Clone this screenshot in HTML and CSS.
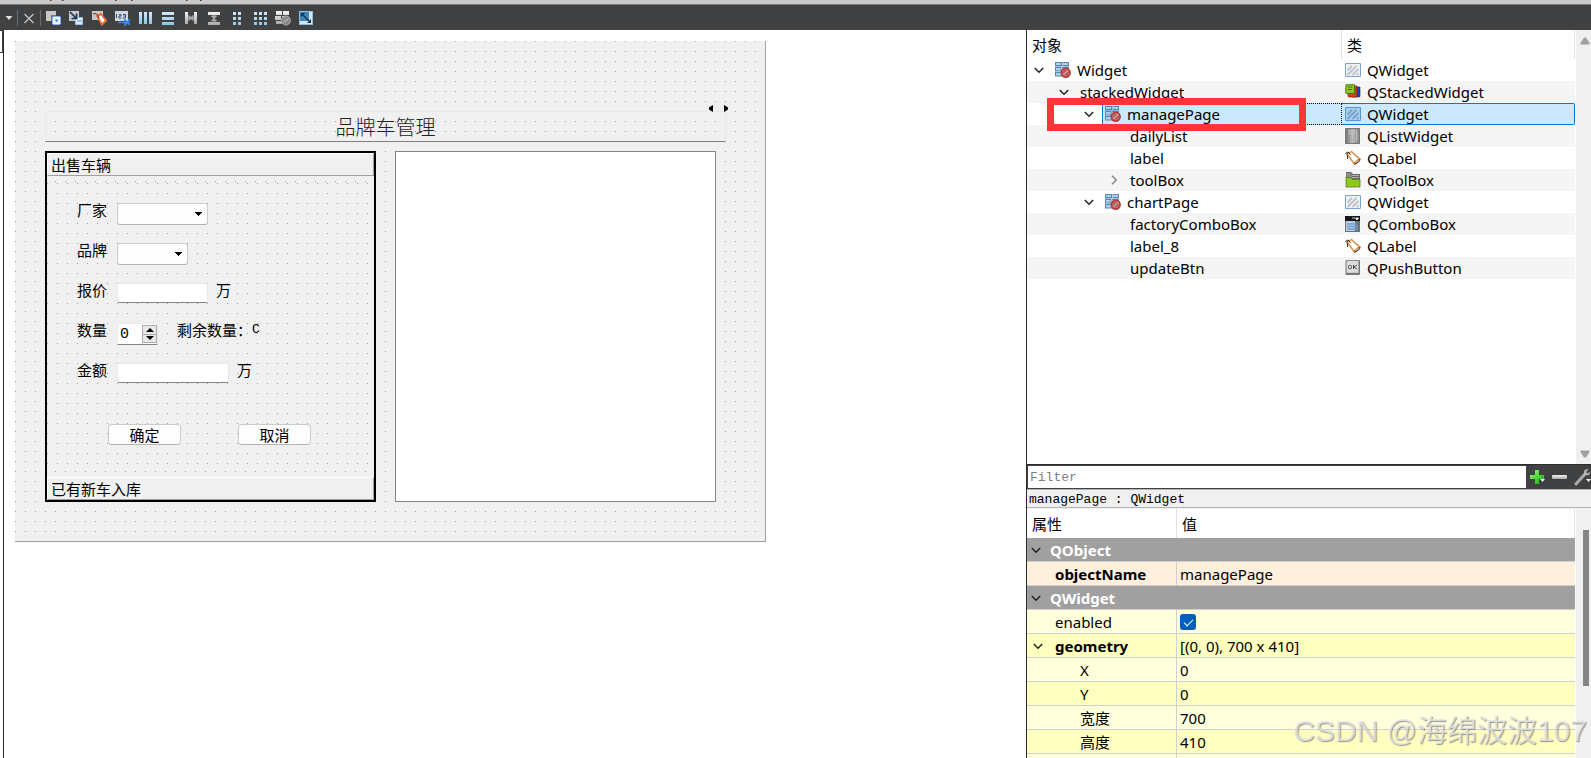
FILE: index.html
```html
<!DOCTYPE html>
<html lang="zh-CN">
<head>
<meta charset="utf-8">
<title>Qt Designer</title>
<link rel="stylesheet" href="styles.css">
</head>
<body>
<svg class="defs" aria-hidden="true">
  <defs>
    <linearGradient id="bluebar" x1="0" y1="0" x2="0" y2="1"><stop offset="0" stop-color="#d4ecf8"/><stop offset="1" stop-color="#8fc4e4"/></linearGradient>
    <linearGradient id="greybar" x1="0" y1="0" x2="0" y2="1"><stop offset="0" stop-color="#f4f4f4"/><stop offset="1" stop-color="#a8a8a8"/></linearGradient>
    <linearGradient id="green" x1="0" y1="0" x2="1" y2="1"><stop offset="0" stop-color="#9dfa7a"/><stop offset="1" stop-color="#00b400"/></linearGradient>
    <linearGradient id="metal" x1="0" y1="0" x2="1" y2="0"><stop offset="0" stop-color="#777"/><stop offset=".5" stop-color="#bbb"/><stop offset="1" stop-color="#888"/></linearGradient>
    <symbol id="down" viewBox="0 0 10 10"><path d="M0.8 3 5 7.2 9.2 3" fill="none" stroke="#222" stroke-width="1.5"/></symbol>
    <symbol id="right" viewBox="0 0 10 10"><path d="M3 0.8 7.2 5 3 9.2" fill="none" stroke="#888" stroke-width="1.5"/></symbol>
    <symbol id="nolayout" viewBox="0 0 16 16">
      <path d="M0 0h7v4.500H0zM7.500 0H14v4.500H7.500zM0 5h6v4.500H0zM6.500 5H14v4.500H6.500zM0 10h7v4.500H0z" fill="#5b86ae"/>
      <path d="M1 1h5v2H1zM8 1h5v2H8zM1 6h4.500v2.500H1zM7 6h6v2.500H7zM1 11h5v2.500H1z" fill="#a9d2ec"/>
      <circle cx="10.700" cy="10.700" r="5.200" fill="#b93a3a"/><circle cx="10.700" cy="10.700" r="3.100" fill="#a5585a" stroke="#cf8484" stroke-width=".7"/><path d="M8.300 13.100 13.100 8.300" stroke="#e0a0a0" stroke-width="1.400"/>
    </symbol>
    <symbol id="widget" viewBox="0 0 16 16"><path d="M.5 1.500h15v13H.5z" fill="#eef0f2" stroke="#78a4da"/><path d="M2.500 8.500 7 4M2.500 13l9-9M7.500 13 13.500 7M12 13l1.500-1.500" stroke="#bfc2c6" stroke-width="1.800"/></symbol>
    <symbol id="widgetsel" viewBox="0 0 16 16"><path d="M.5 1.500h15v13H.5z" fill="#a8cdec" stroke="#5796d3"/><path d="M2.500 8.500 7 4M2.500 13l9-9M7.500 13 13.500 7M12 13l1.500-1.500" stroke="#76a2c8" stroke-width="1.800"/></symbol>
    <symbol id="stack" viewBox="0 0 16 16"><path d="M6 3h9v9q0 1-1 1H7z" fill="#124cae" stroke="#222" stroke-width=".6"/><path d="M3 2h9v10q0 1-1 1H4q-1 0-1-1z" fill="#df3b16" stroke="#502010" stroke-width=".6"/><path d="M1 .7h8.500v8.800H2q-1.500 0-1.500-1z" fill="#8cc81c" stroke="#3d6410" stroke-width=".8"/><path d="M3 3h4M3 5.500h4" stroke="#456d10"/></symbol>
    <symbol id="list" viewBox="0 0 16 16"><path d="M0 0h15v16H0z" fill="#777"/><path d="M1 1h13v14H1z" fill="url(#metal)"/><path d="M11.500 2v11M4 3h5v3H4z" stroke="#ccc" stroke-width=".7" fill="none"/></symbol>
    <symbol id="tag" viewBox="0 0 16 16"><path d="M2 4 6.500 1.500 14 8.500 9 13.500z" fill="#fff" stroke="#dc8a3b" stroke-width="1.400" stroke-linejoin="round"/><path d="M15 8.500q0 3.500-6 6" fill="none" stroke="#5e432a" stroke-width="1.300"/><path d="M.5 3.500Q3 0 5.500 5M2 3l.7 6" fill="none" stroke="#46301d" stroke-width="1"/></symbol>
    <symbol id="toolbox" viewBox="0 0 16 16"><path d="M1 0h5l2 2h7v13H1z" fill="#6a6a6a"/><path d="M1.500 2h4l1.500 1.500h7M1.500 4h4L7 5.500h7" stroke="#c4c4c4" fill="none" stroke-width=".8"/><path d="M1 5.500h4.500l2 2H15V15H1z" fill="#8fc91b" stroke="#557f18" stroke-width=".8"/></symbol>
    <symbol id="combo" viewBox="0 0 16 16"><path d="M0 0h15v16H0z" fill="#6c7177"/><path d="M0 0h15v5H0z" fill="#171717"/><path d="M7 2h3M10.500 2l1.500 2L13.500 2z" stroke="#fff" stroke-width=".8" fill="#fff"/><path d="M1 5h9v10H1z" fill="#b7cde4"/><path d="M2 8h10M2 10.500h11M2 13h11" stroke="#6ea0d2" stroke-width="1.300"/></symbol>
    <symbol id="push" viewBox="0 0 16 16"><rect x=".5" y="0" width="14.500" height="15" rx="1" fill="#777"/><path d="M1.500.8h12v12h-12z" fill="#ddd"/><rect x="3.500" y="5.500" width="3" height="3.200" rx="1" fill="none" stroke="#444"/><path d="M8.500 5v4M11.800 5 9 7l2.800 2" fill="none" stroke="#444"/></symbol>
  </defs>
</svg>

<div class="strip" aria-hidden="true"><svg width="210" height="2"><path d="M50 .5h1M62 .5h1M115 .5h1M131 .5h1M186 .5h1M200 .5h1" stroke="#26364f" stroke-width="1"/><path d="M51 .5h1M63 .5h1M116 .5h1M132 .5h1M187 .5h1M201 .5h1" stroke="#b5713a" stroke-width="1"/></svg></div>

<header class="toolbar">
  <button class="tb menu" aria-label="菜单"><svg width="8" height="16"><path d="M.5 6h7L4 10z" fill="#e0e0e0"/></svg></button>
  <span class="sep"></span>
  <button class="tb close" aria-label="关闭"><svg width="10" height="16"><path d="M.5 4 9.500 13M9.500 4 .5 13" stroke="#c8c8c8" stroke-width="1.200"/></svg></button>
  <span class="sep"></span>
  <div class="tools">
    <button class="tb" aria-label="编辑控件"><svg width="16" height="16"><path d="M1 1h10v10H1z" fill="#c8c8c8"/><path d="M6 5h5v6H6z" fill="#777"/><path d="M7.500 6.500h8v8h-8z" fill="#eaf3ff" stroke="#8db7f0"/><path d="M10.500 9.500h2v2h-2zM7 6h1v1H7zM15 6h1v1h-1zM7 14h1v1H7zM15 14h1v1h-1z" fill="#1c5cd0"/></svg></button>
    <button class="tb" aria-label="编辑信号/槽"><svg width="16" height="16"><path d="M1 1h10v10H1z" fill="#c8c8c8"/><path d="M7.500 7.500h7v7h-7z" fill="#d9ebff" stroke="#9cc2f0"/><path d="M9 11h5" stroke="#5d95dd"/><path d="m2 2 6 6M8.500 3.500v5h-5" stroke="#173755" stroke-width="1.700" fill="none"/></svg></button>
    <button class="tb" aria-label="编辑伙伴"><svg width="16" height="16"><path d="M1 1h11v9H1z" fill="#c8c8c8"/><path d="m6 6 4-2 5 6.500-4 4z" fill="#fff" stroke="#ec6f37" stroke-width="2"/><path d="M2 4q4-2 6 4" fill="none" stroke="#682c18"/></svg></button>
    <button class="tb" aria-label="编辑 Tab 顺序"><svg width="16" height="16"><path d="M1 1h13v10H1z" fill="#d0d6de"/><path d="M2.500 4v4M1.800 4.500h1M5 4.500h2v1.500H5V8h2.500M9 4.500h2.500V8H9M9.500 6h2" fill="none" stroke="#31577d"/><path d="M4 12.500h7M11 10l3 2.500-3 2.500zM15 9v6" fill="#3486e4" stroke="#3486e4" stroke-width="1.600"/></svg></button>
    <button class="tb" aria-label="水平布局"><svg width="16" height="16"><path d="M2 2h3v12H2zM7 2h3v12H7zM12 2h3v12h-3z" fill="url(#bluebar)"/></svg></button>
    <button class="tb" aria-label="垂直布局"><svg width="16" height="16"><path d="M2 2h12v3H2zM2 7h12v3H2zM2 12h12v3H2z" fill="url(#bluebar)"/></svg></button>
    <button class="tb" aria-label="水平分裂器"><svg width="16" height="16"><path d="M2 2h3v12H2zM11 2h3v12h-3z" fill="url(#greybar)"/><path d="M5 8h6M6 5.500v5L8.500 8zM10 5.500v5L7.500 8z" fill="#aaa" stroke="#aaa"/></svg></button>
    <button class="tb" aria-label="垂直分裂器"><svg width="16" height="16"><path d="M2 2h12v3H2zM2 12h12v3H2z" fill="url(#greybar)"/><path d="M8 5v6M5.500 6h5L8 8.500zM5.500 11h5L8 8.500z" fill="#aaa" stroke="#aaa"/></svg></button>
    <button class="tb" aria-label="表单布局"><svg width="16" height="16"><path d="M4 2h3v3H4zM9 2h3v3H9zM4 7h3v3H4zM9 7h3v3H9zM4 12h3v3H4zM9 12h3v3H9z" fill="url(#bluebar)"/></svg></button>
    <button class="tb" aria-label="栅格布局"><svg width="16" height="16"><path d="M2 2h3v3H2zM7 2h3v3H7zM12 2h3v3h-3zM2 7h3v3H2zM7 7h3v3H7zM12 7h3v3h-3zM2 12h3v3H2zM7 12h3v3H7zM12 12h3v3h-3z" fill="url(#bluebar)"/></svg></button>
    <button class="tb" aria-label="打破布局"><svg width="16" height="16"><path d="M1 1h6v4H1zM8 1h6v4H8zM0 6h6v4H0zM7 6h6v4H7zM1 11h6v3H1z" fill="url(#greybar)"/><circle cx="11" cy="10.500" r="4.500" fill="#888" stroke="#aaa"/><path d="m8.500 12.500 5-4" stroke="#ccc"/></svg></button>
    <button class="tb" aria-label="调整大小"><svg width="16" height="16"><path d="M1 1h14v14H1z" fill="#8fbde0"/><path d="M2 2h9v9H2z" fill="#3f86b8"/><path d="M2 11h9V2h3v12H2z" fill="#d5e6f2"/><path d="m4 4 8 8" stroke="#0e3550" stroke-width="1.300"/><path d="M3 3h4L3 7zM13 13V9l-4 4z" fill="#0e3550"/></svg></button>
  </div>
</header>

<div class="workspace">
  <main class="canvas">
    <div class="gutter"><span class="stub"></span></div>
    <section class="form">
      <nav class="pager">
        <button aria-label="上一页"><svg width="4" height="7"><path d="M4 0v7L0 4.500v-2z"/></svg></button>
        <button aria-label="下一页"><svg width="4" height="7"><path d="M0 0v7l4-2.500v-2z"/></svg></button>
      </nav>
      <h1 class="title">品牌车管理</h1>
      <div class="panes">
        <section class="toolbox">
          <button class="tab">出售车辆</button>
          <form class="page" onsubmit="return false">
            <div class="row"><label for="factory">厂家</label><select id="factory" class="w-wide"></select></div>
            <div class="row"><label for="brand">品牌</label><select id="brand" class="w-mid"></select></div>
            <div class="row"><label for="price">报价</label><input id="price" class="line w-wide" type="text"><span>万</span></div>
            <div class="row"><label for="amount">数量</label><div class="spin"><input id="amount" type="text" value="0"><div class="steps"><button type="button" aria-label="增加"><svg width="8" height="4"><path d="M0 4 4 0l4 4z"/></svg></button><button type="button" aria-label="减少"><svg width="8" height="4"><path d="M0 0 4 4l4-4z"/></svg></button></div></div><span class="remain">剩余数量：<span class="count">C</span></span></div>
            <div class="row"><label for="total">金额</label><input id="total" class="line w-total" type="text"><span>万</span></div>
            <div class="actions"><button type="submit">确定</button><button type="button">取消</button></div>
          </form>
          <button class="tab bottom">已有新车入库</button>
        </section>
        <div class="listview" role="listbox" aria-label="dailyList"></div>
      </div>
    </section>
  </main>

  <aside class="dock">
    <section class="inspector">
      <table class="tree">
        <colgroup><col class="c-object"><col></colgroup>
        <thead><tr><th>对象</th><th>类</th></tr></thead>
        <tbody>
          <tr><td><div class="node d0"><button class="twist" aria-label="折叠"><svg><use href="#down"/></svg></button><svg class="ic"><use href="#nolayout"/></svg><span>Widget</span></div></td><td><div class="cls"><svg class="ic"><use href="#widget"/></svg><span>QWidget</span></div></td></tr>
          <tr><td><div class="node d1"><button class="twist" aria-label="折叠"><svg><use href="#down"/></svg></button><span>stackedWidget</span></div></td><td><div class="cls"><svg class="ic"><use href="#stack"/></svg><span>QStackedWidget</span></div></td></tr>
          <tr class="selected"><td><div class="node d2"><button class="twist" aria-label="折叠"><svg><use href="#down"/></svg></button><div class="pick"><svg class="ic"><use href="#nolayout"/></svg><span>managePage</span></div></div><div class="marker"></div></td><td><div class="cls"><svg class="ic"><use href="#widgetsel"/></svg><span>QWidget</span></div></td></tr>
          <tr><td><div class="node d3"><span class="twist"></span><span>dailyList</span></div></td><td><div class="cls"><svg class="ic"><use href="#list"/></svg><span>QListWidget</span></div></td></tr>
          <tr><td><div class="node d3"><span class="twist"></span><span>label</span></div></td><td><div class="cls"><svg class="ic"><use href="#tag"/></svg><span>QLabel</span></div></td></tr>
          <tr><td><div class="node d3"><button class="twist" aria-label="展开"><svg><use href="#right"/></svg></button><span>toolBox</span></div></td><td><div class="cls"><svg class="ic"><use href="#toolbox"/></svg><span>QToolBox</span></div></td></tr>
          <tr><td><div class="node d2"><button class="twist" aria-label="折叠"><svg><use href="#down"/></svg></button><svg class="ic"><use href="#nolayout"/></svg><span>chartPage</span></div></td><td><div class="cls"><svg class="ic"><use href="#widget"/></svg><span>QWidget</span></div></td></tr>
          <tr><td><div class="node d3"><span class="twist"></span><span>factoryComboBox</span></div></td><td><div class="cls"><svg class="ic"><use href="#combo"/></svg><span>QComboBox</span></div></td></tr>
          <tr><td><div class="node d3"><span class="twist"></span><span>label_8</span></div></td><td><div class="cls"><svg class="ic"><use href="#tag"/></svg><span>QLabel</span></div></td></tr>
          <tr><td><div class="node d3"><span class="twist"></span><span>updateBtn</span></div></td><td><div class="cls"><svg class="ic"><use href="#push"/></svg><span>QPushButton</span></div></td></tr>
        </tbody>
      </table>
      <div class="scroll">
        <svg width="10" height="8"><path d="M4 .5h2L9.500 6v1.500H.5V6z" fill="#a0a0a0"/></svg>
        <svg width="10" height="8"><path d="M.5.5h9V2L6 7.500H4L.5 2z" fill="#a0a0a0"/></svg>
      </div>
    </section>

    <div class="filterbar">
      <input type="text" placeholder="Filter" aria-label="Filter">
      <button class="tb" aria-label="添加"><svg width="18" height="18"><path d="M7 2h4v5h5v4h-5v5H7v-5H2V7h5z" fill="url(#green)"/><path d="M12 11h5l-2.500 3z" fill="#eee"/></svg></button>
      <button class="tb" aria-label="删除"><svg width="16" height="18"><rect x="0" y="7" width="15" height="4" rx="1" fill="url(#greybar)"/></svg></button>
      <button class="tb" aria-label="配置"><svg width="17" height="18"><path d="M2 16 11 6" stroke="#aaa" stroke-width="3" stroke-linecap="round"/><path d="M14.500 1.500q-4-1-4.500 2.500-.2 3 3 3.200 3 0 3-3.200l-2.500 1.500-1.500-1.500z" fill="#bbb"/><path d="M12 11h5l-2.500 3z" fill="#eee"/></svg></button>
    </div>
    <div class="caption">managePage : QWidget</div>

    <section class="properties">
      <table class="props">
        <colgroup><col class="c-prop"><col></colgroup>
        <thead><tr><th>属性</th><th>值</th></tr></thead>
        <tbody>
          <tr class="group"><td colspan="2"><div class="name"><button class="twist" aria-label="折叠"><svg><use href="#down"/></svg></button>QObject</div></td></tr>
          <tr class="peach"><td><div class="name k1"><b>objectName</b></div></td><td>managePage</td></tr>
          <tr class="group"><td colspan="2"><div class="name"><button class="twist" aria-label="折叠"><svg><use href="#down"/></svg></button>QWidget</div></td></tr>
          <tr class="light"><td><div class="name k1"><label for="enabled">enabled</label></div></td><td><input id="enabled" type="checkbox" checked></td></tr>
          <tr class="deep"><td><div class="name"><button class="twist wide" aria-label="折叠"><svg><use href="#down"/></svg></button><b>geometry</b></div></td><td>[(0, 0), 700 x 410]</td></tr>
          <tr class="light"><td><div class="name k2">X</div></td><td>0</td></tr>
          <tr class="deep"><td><div class="name k2">Y</div></td><td>0</td></tr>
          <tr class="light"><td><div class="name k2">宽度</div></td><td>700</td></tr>
          <tr class="deep"><td><div class="name k2">高度</div></td><td>410</td></tr>
          <tr class="light"><td></td><td></td></tr>
        </tbody>
      </table>
      <div class="scroll thin"><span class="thumb"></span></div>
    </section>
  </aside>
</div>
<div class="watermark">CSDN @海绵波波107</div>
</body>
</html>
```
FILE: styles.css
```css
* { box-sizing: border-box; }

body {
  margin: 0;
  height: 100vh;
  display: flex;
  flex-direction: column;
  overflow: hidden;
  background: #fff;
  color: #000;
  font: 15px/22px "Noto Sans", "Noto Sans CJK SC", sans-serif;
}

button { padding: 0; border: 0; background: none; color: inherit; font: inherit; }
svg { display: block; }
.defs { position: absolute; width: 0; height: 0; }

/* Top bars */
.strip { flex: none; height: 5px; background: #c9c9c9; border-bottom: 1px solid #77787a; }
.toolbar { flex: none; height: 25px; display: flex; align-items: center; background: #404142; }
.tb { display: flex; align-items: center; flex: none; }
.menu { padding: 0 4px 0 5px; }
.sep { width: 1px; height: 16px; background: #6c6d6e; }
.close { padding: 0 6px; }
.tools { display: flex; gap: 7px; margin-left: 4px; }

/* Workspace */
.workspace { flex: 1; min-height: 0; display: grid; grid-template-columns: minmax(0, 1026fr) minmax(0, 565fr); }

.canvas { display: flex; align-items: flex-start; gap: 11px; overflow: hidden; }
.gutter { align-self: stretch; width: 4px; border-right: 1px solid #2c2c2c; }
.stub { display: block; height: 23px; border: solid #404142; border-width: 1px 1px 1px 0; }

.form {
  position: relative;
  flex: none;
  width: 751px;
  margin-top: 11px;
  padding: 70px 39px 39px 30px;
  border: solid #a0a0a0;
  border-width: 0 1px 1px 0;
  background: conic-gradient(at 1px 1px, transparent 75%, #a0a0a0 0) 0 0 / 10px 10px, #f0f0f0;
  font-family: "Noto Sans CJK SC", sans-serif;
}
.pager { position: absolute; top: 64px; right: 37px; display: flex; gap: 11px; }
.title {
  margin: 0 0 9px;
  height: 31px;
  border: 1px solid #e8e8e8;
  border-bottom-color: #808080;
  color: #222;
  font-size: 20px;
  line-height: 30px;
  font-weight: 300;
  text-align: center;
}
.panes { display: grid; grid-template-columns: 331px 321px; gap: 19px; margin-right: 10px; }
.toolbox { display: flex; flex-direction: column; height: 351px; border: 2px solid #000; }
.tab {
  flex: none;
  height: 23px;
  padding: 0 3px;
  border: 1px solid #fff;
  border-right-color: #a0a0a0;
  border-bottom-color: #a0a0a0;
  background: #f0f0f0;
  line-height: 19px;
  text-align: left;
}
.page {
  flex: 1;
  display: flex;
  flex-direction: column;
  gap: 18px;
  margin: 7px 0;
  padding: 20px 0 0 30px;
  background: conic-gradient(at 1px 1px, transparent 75%, #a0a0a0 0) 0 0 / 10px 10px, #f0f0f0;
}
.row { display: flex; align-items: flex-start; gap: 10px; height: 22px; line-height: 14px; }
.row label { width: 30px; }
.row select {
  appearance: none;
  height: 22px;
  border: 1px solid #ccc;
  border-bottom-color: #b4b4b4;
  border-radius: 3px;
  background-color: #fdfdfd;
  background-image: linear-gradient(#000, #000), linear-gradient(#000, #000), linear-gradient(#000, #000), linear-gradient(#000, #000);
  background-size: 7px 1px, 5px 1px, 3px 1px, 1px 1px;
  background-position: right 5px top 8px, right 6px top 9px, right 7px top 10px, right 8px top 11px;
  background-repeat: no-repeat;
}
.w-wide { width: 91px; }
.w-mid { width: 71px; }
.w-total { width: 112px; }
.line { height: 20px; border: 1px solid #ebebeb; border-bottom-color: #868686; border-radius: 2px; background: #fff; }
.row .line + span { margin-left: -2px; }
.spin { display: flex; width: 41px; height: 22px; border: 1px solid #ebebeb; border-bottom-color: #868686; background: #fff; }
.spin input { flex: 1; min-width: 0; padding: 2px 0 0 2px; border: 0; background: none; font: 15px/20px "Liberation Mono", monospace; }
.steps { display: flex; flex-direction: column; width: 15px; margin-top: 1px; height: 18px; border: 1px solid #adadad; background: #e8e8e8; }
.steps button { flex: 1; display: flex; align-items: center; justify-content: center; }
.steps button + button { border-top: 1px solid #adadad; }
.remain { display: flex; margin-left: 9px; }
.count { font-family: "Liberation Mono", monospace; font-size: 13px; }
.actions { display: flex; gap: 57px; margin: 21px 0 0 31px; }
.actions button {
  width: 73px;
  height: 21px;
  border: 1px solid #ccc;
  border-bottom-color: #b4b4b4;
  border-radius: 4px;
  background: #fdfdfd;
  line-height: 17px;
}
.listview { border: 1px solid #828790; background: #fff; }

/* Dock */
.dock { display: flex; flex-direction: column; min-height: 0; border-left: 1px solid #2c2c2c; }
.inspector { flex: 434 1 0; min-height: 0; display: flex; align-items: flex-start; overflow: hidden; }
table { flex: 1; min-width: 0; border-collapse: separate; border-spacing: 0; table-layout: fixed; }
th, td { padding: 0; font-weight: 400; text-align: left; }
th { height: 29px; padding-left: 5px; border-right: 1px solid #e0e0e0; }
.c-object { width: 315px; }
.tree td { position: relative; height: 22px; }
.tree tbody tr:nth-child(even) { background: #f5f5f5; }
.node, .cls, .pick { display: flex; align-items: center; height: 22px; }
.node { gap: 3px; line-height: 20px; }
.d1 { padding-left: 25px; }
.d2 { padding-left: 50px; }
.d3 { padding-left: 75px; }
.twist { flex: none; display: flex; align-items: center; justify-content: center; width: 25px; height: 20px; }
.tree .twist { padding-right: 2px; }
.twist svg { width: 10px; height: 10px; }
.ic { flex: none; width: 16px; height: 16px; }
.node .ic + span { margin-left: 3px; }
.cls { gap: 6px; padding-left: 3px; line-height: 20px; }
.selected .node { gap: 0; }
.pick { flex: 1; padding-left: 2px; gap: 3px; border: 1px dotted #000; border-left: 1px solid #0078d4; background: #cce8ff; }
.selected .cls { border: 1px solid #0078d4; border-left: 0; border-radius: 0 2px 2px 0; background: #cce8ff; }
.marker { position: absolute; z-index: 1; top: -5px; left: 20px; width: 259px; height: 33px; border: 7px solid #fc3636; pointer-events: none; }

.scroll { flex: none; align-self: stretch; width: 15px; margin-left: 1px; padding: 7px 0 6px 4px; display: flex; flex-direction: column; justify-content: space-between; background: #f0f0f0; }
.thin { padding: 21px 2px 0 7px; }
.thumb { height: 156px; background: #858585; }

.filterbar { flex: none; display: flex; align-items: center; gap: 6px; height: 25px; background: #404142; border-top: 1px solid #2c2c2c; }
.filterbar input { flex: 1; min-width: 0; align-self: stretch; margin: 1px -4px 1px 1px; padding: 2px 2px 0; border: 0; background: #fff; font: 13px/20px "Liberation Mono", monospace; }
.filterbar input::placeholder { color: #808080; opacity: 1; }
.caption { flex: none; height: 19px; padding: 0 2px; border: solid #b4b4b4; border-width: 1px 0; background: #f0f0f0; font: 13px/19px "Liberation Mono", monospace; }

.properties { flex: 249 1 0; min-height: 0; display: flex; align-items: flex-start; overflow: hidden; border-top: 1px solid #f0f0f0; }
.c-prop { width: 150px; }
.props td { height: 24px; border-bottom: 1px solid #d0d0d0; }
.props td:first-child { border-right: 1px solid #d0d0d0; }
.props td + td { padding-left: 3px; }
.name { display: flex; align-items: center; }
.group { background: #a0a0a0; color: #fff; }
.props .group td { border-right: 0; font-weight: 700; }
.group .twist { width: 18px; margin-right: 5px; }
.twist.wide { width: 22px; margin-right: 6px; }
.k1 { padding-left: 28px; }
.k2 { padding-left: 53px; }
.peach { background: #fff0de; }
.light { background: #ffffdc; }
.deep { background: #ffffbf; }
.props input[type="checkbox"] {
  appearance: none;
  display: block;
  width: 16px;
  height: 16px;
  margin: 0;
  border-radius: 3px;
  background: #005fb8;
}
.props input[type="checkbox"]::before {
  content: "";
  display: block;
  width: 8px;
  height: 4px;
  margin: 5px 4px;
  border: solid #fff;
  border-width: 0 0 1px 1px;
  transform: rotate(-45deg);
}

.watermark {
  position: absolute;
  right: 4px;
  bottom: 6px;
  color: rgba(232, 232, 232, .8);
  font: 30px/42px "Liberation Sans", "Noto Sans CJK SC", sans-serif;
  text-shadow: 1px 1px 1px rgba(110, 110, 110, .7);
  pointer-events: none;
}
```
